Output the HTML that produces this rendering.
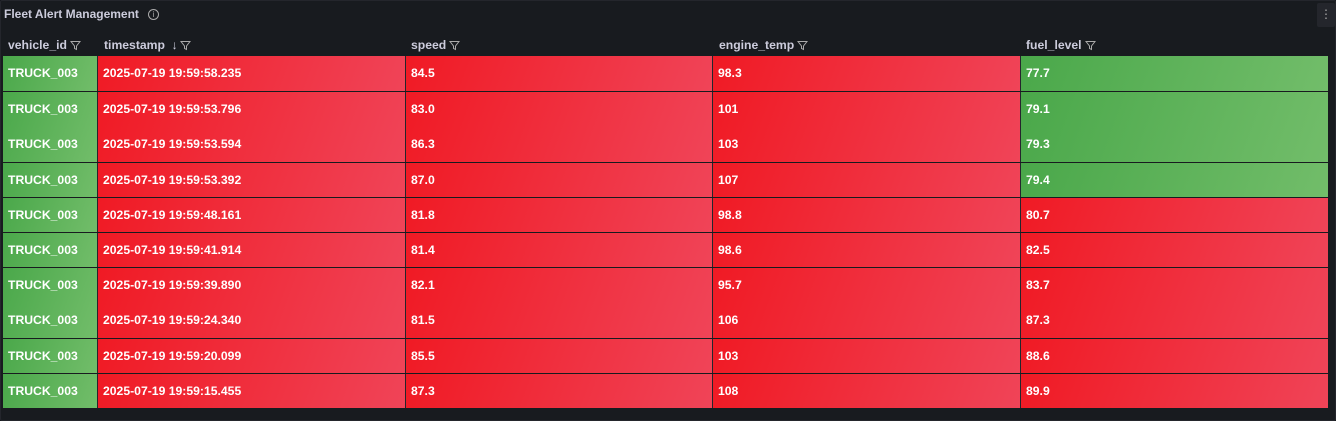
<!DOCTYPE html>
<html><head><meta charset="utf-8"><style>
*{margin:0;padding:0;box-sizing:border-box}
body{width:1336px;height:421px;background:#111217;font-family:"Liberation Sans",sans-serif;overflow:hidden;position:relative}
.panel{position:absolute;left:0;top:0;width:1336px;height:421px;background:#181b1f;border:1px solid #24262c;border-radius:2px}
.title{position:absolute;left:3px;top:6px;font-size:12px;color:#ccccdc;font-weight:bold}
.info{position:absolute;left:147px;top:8px;width:11px;height:11px;border:1px solid #aaa;border-radius:50%;font-size:8px;color:#aaa;text-align:center;line-height:9px}
.menu{position:absolute;left:1316px;top:2px;width:18px;height:24px;background:#24262c;border-radius:2px;color:#aaa;font-size:12px;text-align:center;line-height:22px}
.hd{position:absolute;top:37px;font-size:12.2px;color:#ccccdc;font-weight:bold}
.hd svg{vertical-align:-2px;margin-left:3px}
.row{position:absolute;left:3px;width:1325px;height:34px}
.c{position:absolute;top:0;height:100%;color:#fff;font-size:12.2px;font-weight:bold;padding-left:5px;line-height:34px}
.t{position:absolute;color:#fff;font-size:12.2px;font-weight:bold;padding-left:5px;line-height:35px;top:0}
.r{background:linear-gradient(110deg,#f01a24 0%,#f04458 100%)}
.g{background:linear-gradient(110deg,#4aa84a 0%,#72bd6a 100%)}
.bl{border-left:1px solid #24262c}
</style></head><body><div class="panel">
<div class="title">Fleet Alert Management</div>
<div class="info">i</div>
<div class="menu">⋮</div>
<div class="hd" style="left:7px">vehicle_id<svg width="11" height="11" viewBox="0 0 11 11"><path d="M1 1.5h9L6.5 6v3.5l-2-1V6z" fill="none" stroke="#aaa" stroke-width="1"/></svg></div>
<div class="hd" style="left:103px">timestamp <span style="margin-left:3px">↓</span><svg width="11" height="11" viewBox="0 0 11 11"><path d="M1 1.5h9L6.5 6v3.5l-2-1V6z" fill="none" stroke="#aaa" stroke-width="1"/></svg></div>
<div class="hd" style="left:410px">speed<svg width="11" height="11" viewBox="0 0 11 11"><path d="M1 1.5h9L6.5 6v3.5l-2-1V6z" fill="none" stroke="#aaa" stroke-width="1"/></svg></div>
<div class="hd" style="left:718px">engine_temp<svg width="11" height="11" viewBox="0 0 11 11"><path d="M1 1.5h9L6.5 6v3.5l-2-1V6z" fill="none" stroke="#aaa" stroke-width="1"/></svg></div>
<div class="hd" style="left:1025px">fuel_level<svg width="11" height="11" viewBox="0 0 11 11"><path d="M1 1.5h9L6.5 6v3.5l-2-1V6z" fill="none" stroke="#aaa" stroke-width="1"/></svg></div>
</div>
<div style="position:absolute;left:0;top:0">
<div class="row" style="top:56px;height:35px"><div class="c g" style="left:0;width:94px">TRUCK_003</div><div class="c r bl" style="left:94px;width:308px">2025-07-19 19:59:58.235</div><div class="c r bl" style="left:402px;width:307px">84.5</div><div class="c r bl" style="left:709px;width:308px">98.3</div><div class="c g bl" style="left:1017px;width:308px">77.7</div></div>
<div class="row" style="top:92px;height:70px"><div class="c g" style="left:0;width:94px"></div><div class="c r bl" style="left:94px;width:308px"></div><div class="c r bl" style="left:402px;width:307px"></div><div class="c r bl" style="left:709px;width:308px"></div><div class="c g bl" style="left:1017px;width:308px"></div></div>
<div class="row" style="top:92px"><div class="t" style="left:0">TRUCK_003</div><div class="t" style="left:95px">2025-07-19 19:59:53.796</div><div class="t" style="left:403px">83.0</div><div class="t" style="left:710px">101</div><div class="t" style="left:1018px">79.1</div></div>
<div class="row" style="top:127px"><div class="t" style="left:0">TRUCK_003</div><div class="t" style="left:95px">2025-07-19 19:59:53.594</div><div class="t" style="left:403px">86.3</div><div class="t" style="left:710px">103</div><div class="t" style="left:1018px">79.3</div></div>
<div class="row" style="top:163px"><div class="c g" style="left:0;width:94px">TRUCK_003</div><div class="c r bl" style="left:94px;width:308px">2025-07-19 19:59:53.392</div><div class="c r bl" style="left:402px;width:307px">87.0</div><div class="c r bl" style="left:709px;width:308px">107</div><div class="c g bl" style="left:1017px;width:308px">79.4</div></div>
<div class="row" style="top:198px"><div class="c g" style="left:0;width:94px">TRUCK_003</div><div class="c r bl" style="left:94px;width:308px">2025-07-19 19:59:48.161</div><div class="c r bl" style="left:402px;width:307px">81.8</div><div class="c r bl" style="left:709px;width:308px">98.8</div><div class="c r bl" style="left:1017px;width:308px">80.7</div></div>
<div class="row" style="top:233px"><div class="c g" style="left:0;width:94px">TRUCK_003</div><div class="c r bl" style="left:94px;width:308px">2025-07-19 19:59:41.914</div><div class="c r bl" style="left:402px;width:307px">81.4</div><div class="c r bl" style="left:709px;width:308px">98.6</div><div class="c r bl" style="left:1017px;width:308px">82.5</div></div>
<div class="row" style="top:268px;height:70px"><div class="c g" style="left:0;width:94px"></div><div class="c r bl" style="left:94px;width:308px"></div><div class="c r bl" style="left:402px;width:307px"></div><div class="c r bl" style="left:709px;width:308px"></div><div class="c r bl" style="left:1017px;width:308px"></div></div>
<div class="row" style="top:268px"><div class="t" style="left:0">TRUCK_003</div><div class="t" style="left:95px">2025-07-19 19:59:39.890</div><div class="t" style="left:403px">82.1</div><div class="t" style="left:710px">95.7</div><div class="t" style="left:1018px">83.7</div></div>
<div class="row" style="top:303px"><div class="t" style="left:0">TRUCK_003</div><div class="t" style="left:95px">2025-07-19 19:59:24.340</div><div class="t" style="left:403px">81.5</div><div class="t" style="left:710px">106</div><div class="t" style="left:1018px">87.3</div></div>
<div class="row" style="top:339px"><div class="c g" style="left:0;width:94px">TRUCK_003</div><div class="c r bl" style="left:94px;width:308px">2025-07-19 19:59:20.099</div><div class="c r bl" style="left:402px;width:307px">85.5</div><div class="c r bl" style="left:709px;width:308px">103</div><div class="c r bl" style="left:1017px;width:308px">88.6</div></div>
<div class="row" style="top:374px"><div class="c g" style="left:0;width:94px">TRUCK_003</div><div class="c r bl" style="left:94px;width:308px">2025-07-19 19:59:15.455</div><div class="c r bl" style="left:402px;width:307px">87.3</div><div class="c r bl" style="left:709px;width:308px">108</div><div class="c r bl" style="left:1017px;width:308px">89.9</div></div>
</div>
</body></html>
